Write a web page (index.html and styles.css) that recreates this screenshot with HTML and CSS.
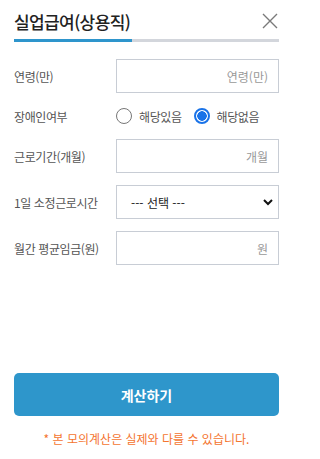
FILE: index.html
```html
<!DOCTYPE html>
<html lang="ko">
<head>
<meta charset="utf-8">
<link rel="stylesheet" href="styles.css">
</head>
<body>
<div class="panel">
  <div class="header">
    <h1 class="title">실업급여(상용직)</h1>
    <svg class="close" width="16" height="16" viewBox="0 0 16 16"><path d="M1 1L15 15M15 1L1 15" stroke="#7a7a7a" stroke-width="1.4" fill="none"/></svg>
  </div>
  <div class="progress"><div class="progress-fill" style="width:44.5%"></div></div>
  <div class="form">
    <div class="row">
      <span class="label">연령(만)</span>
      <input class="field" type="text" placeholder="연령(만)">
    </div>
    <div class="row radio-row">
      <span class="label">장애인여부</span>
      <div class="radios">
        <label class="radio"><span class="dot"></span>해당있음</label>
        <label class="radio"><span class="dot on"></span>해당없음</label>
      </div>
    </div>
    <div class="row">
      <span class="label">근로기간(개월)</span>
      <input class="field" type="text" placeholder="개월">
    </div>
    <div class="row">
      <span class="label">1일 소정근로시간</span>
      <div class="select">
        <span>--- 선택 ---</span>
        <svg width="10" height="7" viewBox="0 0 10 7"><path d="M1 1L5 5L9 1" stroke="#111" stroke-width="2" fill="none"/></svg>
      </div>
    </div>
    <div class="row">
      <span class="label">월간 평균임금(원)</span>
      <input class="field" type="text" placeholder="원">
    </div>
  </div>
  <button class="submit">계산하기</button>
  <p class="note">* 본 모의계산은 실제와 다를 수 있습니다.</p>
</div>
</body>
</html>
```

FILE: styles.css
```css
* { box-sizing: border-box; }
html, body { margin: 0; padding: 0; background: #fff; }
body { font-family: "Noto Sans CJK KR", "Noto Sans", sans-serif; }
.panel {
  width: 297px;
  height: 459px;
  padding: 0 18px 0 14px;
  display: flex;
  flex-direction: column;
}
.header {
  display: flex;
  justify-content: space-between;
  align-items: center;
  height: 39px;
  padding-top: 3px;
}
.title {
  margin: 0;
  font-size: 17px;
  font-weight: 500;
  color: #222;
  letter-spacing: -0.6px;
}
.close { margin-right: 1px; }
.progress {
  height: 3px;
  background: #d3d6dc;
}
.progress-fill { height: 100%; background: #2e95cc; }
.form {
  display: flex;
  flex-direction: column;
  gap: 12px;
  margin-top: 17px;
}
.row {
  display: flex;
  align-items: center;
  height: 34px;
}
.radio-row { height: 22px; }
.label {
  width: 102px;
  flex: none;
  font-size: 12px;
  color: #555;
  letter-spacing: -0.4px;
}
.field {
  flex: 1;
  height: 34px;
  border: 1px solid #c8cdd5;
  border-radius: 0;
  padding: 0 10px;
  text-align: right;
  font-family: inherit;
  font-size: 12px;
  outline: none;
}
.field::placeholder { color: #999; }
.radios { display: flex; gap: 12px; }
.radio {
  display: flex;
  align-items: center;
  gap: 7px;
  font-size: 12px;
  color: #555;
  letter-spacing: -0.4px;
}
.dot {
  width: 16px;
  height: 16px;
  border-radius: 50%;
  border: 1px solid #777;
  flex: none;
}
.dot.on {
  border: 2px solid #1a73e8;
  background: radial-gradient(circle, #1a73e8 0 4.5px, #fff 5px);
}
.select {
  flex: 1;
  height: 34px;
  border: 1px solid #c8cdd5;
  display: flex;
  align-items: center;
  justify-content: space-between;
  padding: 0 5px 0 14px;
  font-size: 12px;
  color: #222;
}
.submit {
  margin-top: auto;
  height: 43px;
  border: 0;
  border-radius: 5px;
  background: #2e96cb;
  color: #fff;
  font-family: inherit;
  font-size: 14px;
  font-weight: 700;
}
.note {
  margin: 14px 0 12px;
  text-align: center;
  font-size: 12px;
  color: #f4742f;
}
```
